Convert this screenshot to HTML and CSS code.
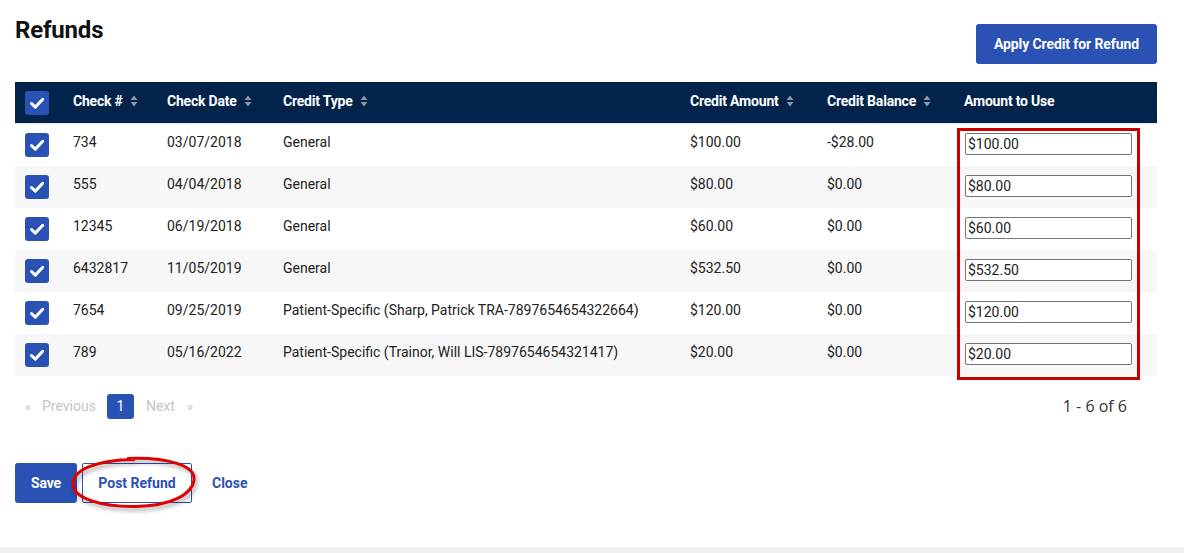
FILE: index.html
```html
<!DOCTYPE html>
<html lang="en">
<head>
    <meta charset="UTF-8">
    <meta name="viewport" content="width=device-width, initial-scale=1.0">
    <title>Refunds</title>
    <link rel="stylesheet" href="styles.css">
</head>
<body>
    <div class="page">
        <div class="top-bar">
            <h1 class="title">Refunds</h1>
            <button class="btn btn-primary btn-apply">Apply Credit for Refund</button>
        </div>

        <div class="table-wrap">
            <table class="refunds">
                <colgroup>
                    <col style="width:48px">
                    <col style="width:94px">
                    <col style="width:116px">
                    <col style="width:407px">
                    <col style="width:137px">
                    <col style="width:137px">
                    <col style="width:203px">
                </colgroup>
                <thead>
                    <tr>
                        <th class="cb"><span class="check"><svg viewBox="0 0 24 24"><path d="M6.5 12.5l3.8 3.6 7.4-7.8" /></svg></span></th>
                        <th>Check # <svg class="sort" viewBox="0 0 8 12"><path d="M4 0.5L7.5 5H0.5z M4 11.5L0.5 7H7.5z" /></svg></th>
                        <th>Check Date <svg class="sort" viewBox="0 0 8 12"><path d="M4 0.5L7.5 5H0.5z M4 11.5L0.5 7H7.5z" /></svg></th>
                        <th>Credit Type <svg class="sort" viewBox="0 0 8 12"><path d="M4 0.5L7.5 5H0.5z M4 11.5L0.5 7H7.5z" /></svg></th>
                        <th>Credit Amount <svg class="sort" viewBox="0 0 8 12"><path d="M4 0.5L7.5 5H0.5z M4 11.5L0.5 7H7.5z" /></svg></th>
                        <th>Credit Balance <svg class="sort" viewBox="0 0 8 12"><path d="M4 0.5L7.5 5H0.5z M4 11.5L0.5 7H7.5z" /></svg></th>
                        <th>Amount to Use</th>
                    </tr>
                </thead>
                <tbody id="rows"></tbody>
            </table>
            <!-- annotation box around the amount column -->
            <div class="mark-box"></div>
        </div>

        <div class="pager-row">
            <div class="pager">
                <span class="pg-arrow">&laquo;</span>
                <span class="pg-link">Previous</span>
                <span class="pg-num">1</span>
                <span class="pg-link">Next</span>
                <span class="pg-arrow">&raquo;</span>
            </div>
            <div class="count">1 - 6 of 6</div>
        </div>

        <div class="actions">
            <button class="btn btn-primary btn-save">Save</button>
            <button class="btn btn-outline">Post Refund</button>
            <button class="btn btn-link">Close</button>
            <svg class="mark-ring" viewBox="0 0 130 52">
                <path d="M58 1.5 C 98 0, 126 9, 124 23 C 122 38, 100 49, 66 49.5 C 30 50, 3 41, 3 27 C 3 13, 26 3, 64 2.5" />
            </svg>
        </div>
    </div>
    <div class="strip"></div>

    <script>
        const credits = [
            ['734', '03/07/2018', 'General', '$100.00', '-$28.00', '$100.00'],
            ['555', '04/04/2018', 'General', '$80.00', '$0.00', '$80.00'],
            ['12345', '06/19/2018', 'General', '$60.00', '$0.00', '$60.00'],
            ['6432817', '11/05/2019', 'General', '$532.50', '$0.00', '$532.50'],
            ['7654', '09/25/2019', 'Patient-Specific (Sharp, Patrick TRA-7897654654322664)', '$120.00', '$0.00', '$120.00'],
            ['789', '05/16/2022', 'Patient-Specific (Trainor, Will LIS-7897654654321417)', '$20.00', '$0.00', '$20.00']
        ];

        const tbody = document.getElementById('rows');
        credits.forEach(function (c) {
            const tr = document.createElement('tr');
            tr.innerHTML =
                '<td class="cb"><span class="check"><svg viewBox="0 0 24 24"><path d="M6.5 12.5l3.8 3.6 7.4-7.8" /></svg></span></td>' +
                '<td>' + c[0] + '</td>' +
                '<td>' + c[1] + '</td>' +
                '<td>' + c[2] + '</td>' +
                '<td>' + c[3] + '</td>' +
                '<td>' + c[4] + '</td>' +
                '<td class="amt"><input class="amount" type="text" value="' + c[5] + '"></td>';
            tbody.appendChild(tr);
        });
    </script>
</body>
</html>
```

FILE: styles.css
```css
body {
    margin: 0;
    font-family: Roboto, Arial, sans-serif;
    color: #222;
    background: #fff;
}

.page {
    height: 547px;
    padding: 0 27px 0 15px;
    box-sizing: border-box;
}

.strip {
    height: 6px;
    background: #efeff0;
}

.top-bar {
    display: flex;
    justify-content: space-between;
    align-items: flex-start;
    height: 82px;
}

.title {
    margin: 16px 0 0;
    font-size: 24px;
    font-weight: 700;
    color: #111;
    letter-spacing: -0.2px;
}

.btn {
    font-family: Roboto, Arial, sans-serif;
    font-size: 14px;
    font-weight: 700;
    border-radius: 3px;
    cursor: pointer;
    height: 40px;
    box-sizing: border-box;
}

.btn-primary {
    background: #2a52b5;
    color: #fff;
    border: none;
}

.btn-apply {
    margin-top: 24px;
    width: 181px;
    padding: 0;
    letter-spacing: -0.1px;
}

.table-wrap {
    position: relative;
}

.refunds {
    width: 1142px;
    border-collapse: collapse;
    table-layout: fixed;
    font-size: 14px;
}

.refunds th {
    background: #02244a;
    color: #fff;
    text-align: left;
    font-weight: 700;
    height: 38px;
    padding: 0 0 3px 10px;
    letter-spacing: -0.2px;
    white-space: nowrap;
    border-bottom: 1px solid #e6e8ec;
}

.refunds td {
    height: 36px;
    padding: 0 0 6px 10px;
    white-space: nowrap;
    color: #222;
}

.refunds th.cb {
    height: 41px;
    padding-bottom: 0;
}

.refunds td.cb {
    height: 42px;
    padding-bottom: 0;
}

.refunds td.amt {
    height: 39px;
    padding-bottom: 3px;
}

.refunds tbody tr:nth-child(even) td {
    background: #f7f7f7;
}

.sort {
    width: 8px;
    height: 12px;
    margin-left: 4px;
    vertical-align: -1px;
    fill: #8c98a8;
}

.check {
    display: inline-block;
    width: 24px;
    height: 24px;
    background: #2a52b5;
    border-radius: 3px;
    vertical-align: middle;
}

.check svg {
    display: block;
    width: 24px;
    height: 24px;
    fill: none;
    stroke: #fff;
    stroke-width: 3;
    stroke-linecap: round;
    stroke-linejoin: round;
}

.amount {
    width: 167px;
    height: 22px;
    box-sizing: border-box;
    margin-left: 1px;
    border: 1px solid #767676;
    border-radius: 2px;
    padding: 0 2px;
    font-family: Roboto, Arial, sans-serif;
    font-size: 14px;
    color: #222;
    background: #fff;
}

.mark-box {
    position: absolute;
    left: 942px;
    top: 46px;
    width: 183px;
    height: 252px;
    border: 3px solid #c80000;
    box-sizing: border-box;
    pointer-events: none;
}

.pager-row {
    display: flex;
    justify-content: space-between;
    align-items: center;
    width: 1142px;
    height: 60px;
}

.pager {
    display: flex;
    align-items: center;
    padding-left: 10px;
    font-size: 14px;
    color: #c6c6c6;
}

.pg-arrow {
    font-size: 13px;
    width: 8px;
}

.pg-link {
    margin: 0 12px;
}

.pager .pg-arrow:first-child + .pg-link {
    margin-left: 9px;
}

.pg-num {
    display: inline-block;
    width: 27px;
    height: 25px;
    line-height: 25px;
    text-align: center;
    background: #2a52b5;
    color: #fff;
    border-radius: 3px;
    margin-left: -1px;
}

.count {
    font-family: "Open Sans", Arial, sans-serif;
    font-size: 16px;
    color: #333;
    margin-right: 30px;
}

.actions {
    position: relative;
    display: flex;
    align-items: center;
    margin-top: 27px;
}

.btn-save {
    width: 62px;
    letter-spacing: -0.2px;
}

.btn-outline {
    margin-left: 5px;
    width: 110px;
    background: #fff;
    color: #2a52b5;
    border: 1px solid #2a52b5;
    border-radius: 2px;
}

.btn-link {
    margin-left: 12px;
    background: none;
    border: none;
    color: #2a52b5;
    padding: 0 8px;
}

.mark-ring {
    position: absolute;
    left: 55px;
    top: -6px;
    width: 130px;
    height: 52px;
    pointer-events: none;
    overflow: visible;
    filter: drop-shadow(2px 3px 2px rgba(0, 0, 0, 0.35));
}

.mark-ring path {
    fill: none;
    stroke: #e00000;
    stroke-width: 3;
    stroke-linecap: round;
}
```
